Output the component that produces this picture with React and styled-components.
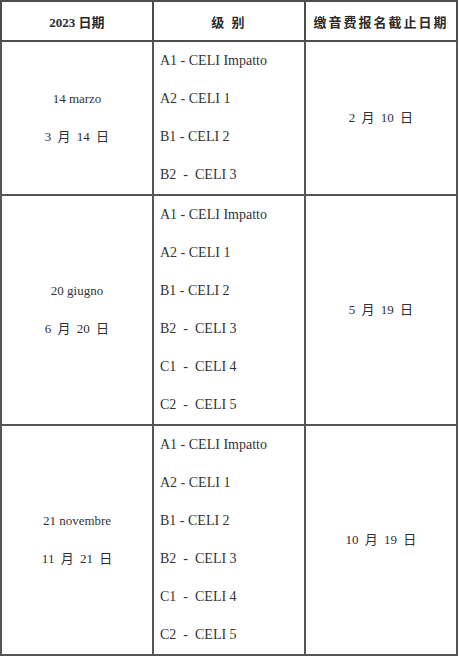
import React from "react";
import styled, { createGlobalStyle } from "styled-components";

const GlobalStyle = createGlobalStyle`
  html, body {
    margin: 0;
    padding: 0;
    background: #fff;
  }
  body {
    font-family: "Liberation Serif", "Noto Sans CJK SC", serif;
    color: #333;
  }
`;

const schedule = [
  {
    date: "14 marzo",
    cn: "3 月 14 日",
    deadline: "2 月 10 日",
    levels: ["A1 - CELI Impatto", "A2 - CELI 1", "B1 - CELI 2", "B2  -  CELI 3"],
  },
  {
    date: "20 giugno",
    cn: "6 月 20 日",
    deadline: "5 月 19 日",
    levels: [
      "A1 - CELI Impatto",
      "A2 - CELI 1",
      "B1 - CELI 2",
      "B2  -  CELI 3",
      "C1  -  CELI 4",
      "C2  -  CELI 5",
    ],
  },
  {
    date: "21 novembre",
    cn: "11 月 21 日",
    deadline: "10 月 19 日",
    levels: [
      "A1 - CELI Impatto",
      "A2 - CELI 1",
      "B1 - CELI 2",
      "B2  -  CELI 3",
      "C1  -  CELI 4",
      "C2  -  CELI 5",
    ],
  },
];

const App = () => {
  return (
    <>
      <GlobalStyle />
      <Table>
        <thead>
          <tr>
            <HeadCell>2023 日期</HeadCell>
            <HeadCell $spread>级 别</HeadCell>
            <HeadCell $spread>缴音费报名截止日期</HeadCell>
          </tr>
        </thead>
        <tbody>
          {schedule.map((row) => (
            <tr key={row.date}>
              <Cell>
                <DateLine>{row.date}</DateLine>
                <CnLine>{row.cn}</CnLine>
              </Cell>
              <LevelCell>
                {row.levels.map((level) => (
                  <Line key={level}>{level}</Line>
                ))}
              </LevelCell>
              <Cell>
                <CnLine>{row.deadline}</CnLine>
              </Cell>
            </tr>
          ))}
        </tbody>
      </Table>
    </>
  );
};
export default App;

const Table = styled.table`
  width: 458px;
  border-collapse: collapse;
  table-layout: fixed;
  border: 2px solid #4d4d4d;
`;

const HeadCell = styled.th`
  width: 33.3%;
  height: 38px;
  padding: 0;
  border: 2px solid #4d4d4d;
  font-family: "Liberation Serif", "Noto Sans CJK SC", serif;
  font-size: 13px;
  font-weight: 700;
  color: #2b2b2b;
  text-align: center;
  vertical-align: middle;
  letter-spacing: ${(p) => (p.$spread ? "2px" : "0")};
`;

const Cell = styled.td`
  padding: 0 4px;
  border: 2px solid #555;
  text-align: center;
  vertical-align: middle;
`;

const LevelCell = styled(Cell)`
  padding: 0 6px;
  text-align: left;
`;

const Line = styled.div`
  height: 38px;
  line-height: 38px;
  font-size: 14px;
  color: #333;
  white-space: pre;
`;

const DateLine = styled(Line)`
  font-size: 13px;
`;

const CnLine = styled(Line)`
  font-family: "Liberation Serif", "Noto Sans CJK SC", serif;
  font-size: 13px;
  word-spacing: 3px;
  color: #2e2e2e;
`;
